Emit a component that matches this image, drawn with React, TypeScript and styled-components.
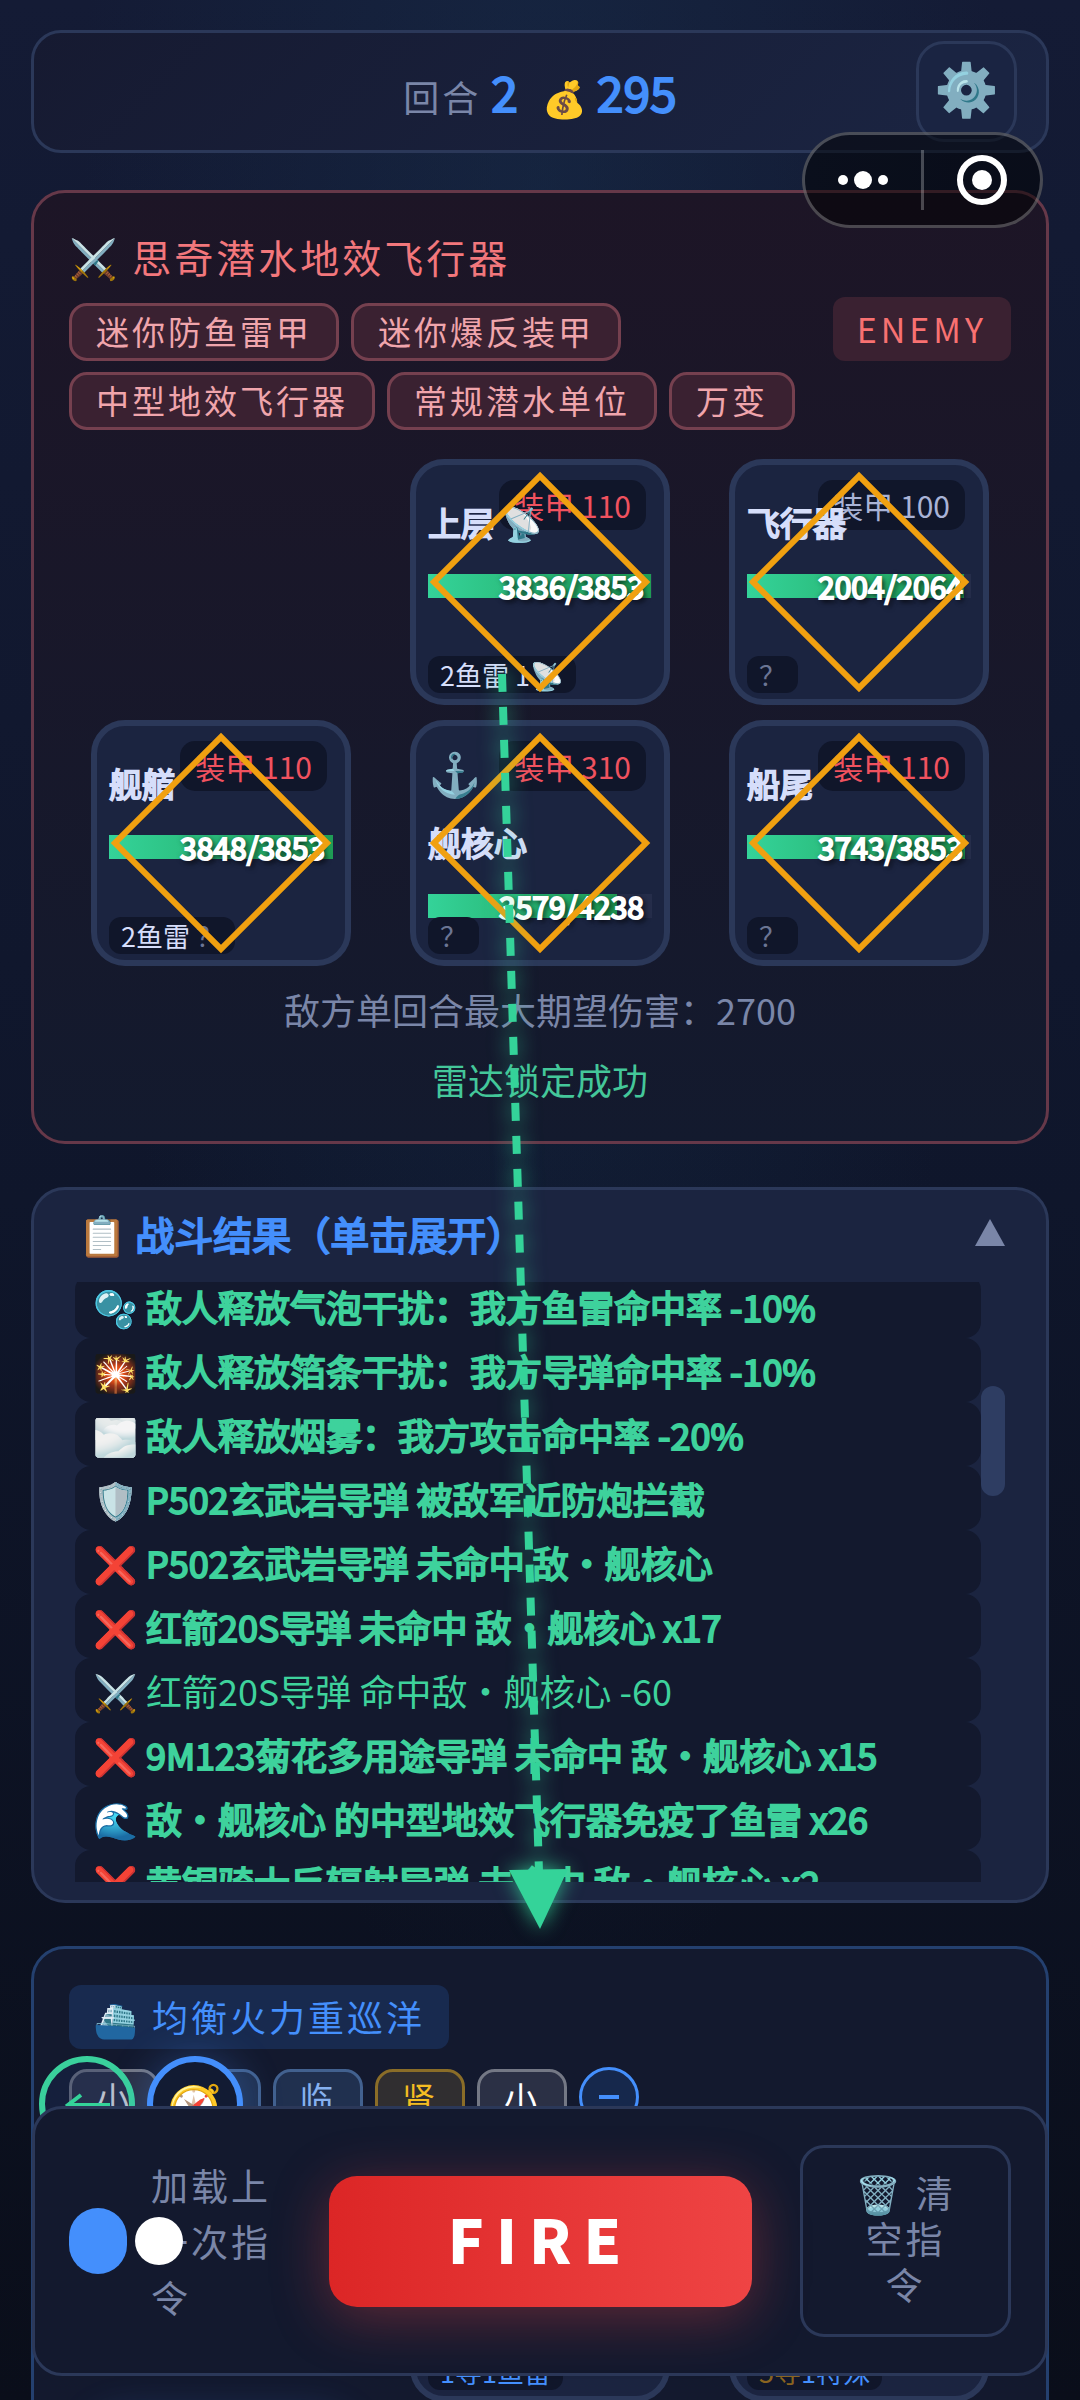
import React from 'react';
import styled, { createGlobalStyle, css } from 'styled-components';

const c = {
  line: '#2b3859',
  panel: '#1b2440',
  deep: '#13192e',
  muted: '#7a86a8',
  text: '#d6defa',
  blue: '#448ffc',
  green: '#34d399',
  red: '#f87171',
};

const Global = createGlobalStyle`
  *, *::before, *::after { box-sizing: border-box; }
  body {
    margin: 0;
    background: #0a0e1a;
    color: ${c.text};
    font-family: "Noto Sans CJK SC", "Noto Color Emoji", sans-serif;
    font-size: 36px;
  }
  button { font: inherit; color: inherit; margin: 0; padding: 0; cursor: pointer; }
  h1, h2, p, ul { margin: 0; padding: 0; font-weight: 400; }
`;

const thick = css`
  font-weight: 400;
  -webkit-text-stroke: 2px currentColor;
`;

const Screen = styled.div`
  position: relative;
  height: 100vh;
  overflow: hidden;
  padding: 30px 31px 0;
  background:
    radial-gradient(ellipse at 50% 10%, rgba(24, 50, 80, 0.42), transparent 60%),
    linear-gradient(180deg, #141b35 0%, #0f162b 50%, #0a0e1a 100%);
`;

const Header = styled.header`
  display: grid;
  grid-template-columns: 1fr auto 1fr;
  align-items: center;
  height: 123px;
  margin-bottom: 37px;
  padding: 0 29px;
  border: 3px solid ${c.line};
  border-radius: 30px;
  background: linear-gradient(135deg, #161a31 0%, #1b2543 100%);
`;

const Stats = styled.div`
  grid-column: 2;
  display: flex;
  align-items: baseline;
  padding-top: 4px;
  line-height: 60px;
`;

const StatLabel = styled.span`
  color: ${c.muted};
  letter-spacing: 3px;
`;

const StatValue = styled.strong<{ $gap?: number }>`
  margin: 0 ${(p) => p.$gap ?? 0}px 0 10px;
  color: ${c.blue};
  font-size: 48px;
  ${thick}
`;

const GearButton = styled.button`
  justify-self: end;
  width: 101px;
  height: 101px;
  padding-bottom: 12px;
  border: 3px solid ${c.line};
  border-radius: 28px;
  background: #1a2442;
  font-size: 52px;
  line-height: 84px;
`;

const Capsule = styled.div`
  position: absolute;
  top: 132px;
  right: 37px;
  z-index: 5;
  display: flex;
  align-items: center;
  width: 241px;
  height: 96px;
  border: 3px solid rgba(255, 255, 255, 0.25);
  border-radius: 48px;
  background: rgba(0, 0, 0, 0.5);
`;

const CapsuleButton = styled.button`
  flex: 1;
  display: grid;
  place-items: center;
  height: 60px;
  border: 0;
  background: none;
  & + & { border-left: 3px solid rgba(255, 255, 255, 0.25); }
`;

const Panel = styled.section<{ $tone: 'enemy' | 'log' | 'ally' }>`
  position: relative;
  margin-bottom: 43px;
  border: 3px solid ${c.line};
  border-radius: 34px;
  ${(p) =>
    p.$tone === 'enemy' &&
    css`
      padding: 33px 35px 35px;
      border-color: #663849;
      background: linear-gradient(180deg, #1d1526 0%, #131a2e 100%);
    `}
  ${(p) =>
    p.$tone === 'log' &&
    css`
      padding: 12px 41px 18px;
      background: ${c.panel};
    `}
  ${(p) =>
    p.$tone === 'ally' &&
    css`
      padding: 36px 35px 39px;
      border-color: #24406f;
      background: ${c.deep};
    `}
`;

const EnemyTitle = styled.h1`
  margin-bottom: 17px;
  color: #f2777c;
  font-size: 39px;
  line-height: 60px;
  letter-spacing: 3px;
`;

const TagBar = styled.div`
  display: flex;
  align-items: flex-start;
  justify-content: space-between;
  margin-bottom: 29px;
`;

const Tags = styled.div<{ $max?: number }>`
  display: flex;
  flex-wrap: wrap;
  gap: 11px 12px;
  max-width: ${(p) => (p.$max ? `${p.$max}px` : 'none')};
`;

const tagTone = {
  red: ['#75404f', '#3a2131', '#f0a5ac'],
  grey: ['#747885', '#2b3045', '#ffffff'],
  blue: ['#42618f', '#20304f', '#86b0f0'],
  gold: ['#8a6d28', '#302e30', '#f5bd22'],
};

const Tag = styled.span<{ $tone: keyof typeof tagTone }>`
  height: 58px;
  padding: 0 24px;
  border: 3px solid ${(p) => tagTone[p.$tone][0]};
  border-radius: 18px;
  background: ${(p) => tagTone[p.$tone][1]};
  color: ${(p) => tagTone[p.$tone][2]};
  font-size: 33px;
  line-height: 50px;
  letter-spacing: 3px;
`;

const SideBadge = styled.span`
  height: 64px;
  margin-top: -6px;
  padding: 0 24px;
  border-radius: 12px;
  background: #3a2131;
  color: ${c.red};
  font-size: 34px;
  line-height: 64px;
  letter-spacing: 4px;
`;

const Grid = styled.div`
  display: grid;
  grid-template-columns: repeat(3, 1fr);
  justify-items: center;
  gap: 15px;
`;

const Cell = styled.div<{ $glow?: boolean }>`
  position: relative;
  width: 260px;
  height: 246px;
  padding: 18px 12px 0;
  border: 6px solid ${c.line};
  border-radius: 34px;
  background: ${c.panel};
  ${(p) => p.$glow && css`box-shadow: 0 0 40px rgba(68, 143, 252, 0.3);`}
`;

const CellIcon = styled.div`
  height: 59px;
  font-size: 43px;
  line-height: 54px;
`;

const CellName = styled.div`
  position: relative;
  margin-bottom: 13px;
  font-size: 33px;
  line-height: 78px;
  white-space: pre;
  ${thick}
`;

const Bar = styled.div`
  position: relative;
  height: 24px;
  background: #252d4a;
`;

const BarFill = styled.div`
  height: 100%;
  background: linear-gradient(90deg, #34d399, #1f9d55);
`;

const BarText = styled.span`
  position: absolute;
  right: 8px;
  top: 0;
  color: #fff;
  font-size: 30px;
  line-height: 24px;
  text-shadow: 3px 3px 5px rgba(0, 0, 0, 0.8), 0 0 5px rgba(0, 0, 0, 0.5);
  ${thick}
`;

const Armor = styled.span<{ $plain?: boolean }>`
  position: absolute;
  top: 15px;
  right: 18px;
  height: 50px;
  padding: 0 15px;
  border-radius: 15px;
  background: #10162a;
  color: ${(p) => (p.$plain ? '#a9b3d6' : '#f0525f')};
  font-size: 30px;
  line-height: 50px;
`;

const Weapons = styled.span`
  position: absolute;
  left: 12px;
  bottom: 6px;
  height: 37px;
  padding: 0 12px;
  border-radius: 12px;
  background: #10162a;
  font-size: 27px;
  line-height: 38px;
  white-space: pre;
`;

const Ink = styled.span<{ $color: string }>`
  color: ${(p) => p.$color};
`;

const Diamond = styled.div`
  position: absolute;
  left: 50%;
  top: 50%;
  width: 156px;
  height: 156px;
  border: 6px solid #f0a010;
  transform: translate(-50%, -50%) rotate(45deg);
`;

const Note = styled.p<{ $ok?: boolean }>`
  color: ${(p) => (p.$ok ? '#44c79a' : c.muted)};
  line-height: 54px;
  text-align: center;
  margin-top: 16px;
`;

const LogHead = styled.button`
  display: flex;
  justify-content: space-between;
  align-items: center;
  width: 100%;
  height: 62px;
  margin-bottom: 18px;
  padding: 0 0 0 3px;
  border: 0;
  background: none;
  color: ${c.blue};
  font-size: 39px;
  white-space: pre;
  ${thick}
`;

const LogBody = styled.div`
  display: flex;
  align-items: stretch;
  height: 600px;
  overflow: hidden;
`;

const LogList = styled.ul`
  flex: 1;
  margin-top: -8px;
  list-style: none;
`;

const LogItem = styled.li<{ $plain?: boolean }>`
  height: 64px;
  padding: 0 18px;
  border-radius: 16px;
  background: ${c.deep};
  color: #3ed29c;
  line-height: 64px;
  white-space: nowrap;
  ${(p) => !p.$plain && thick}
`;

const Track = styled.div`
  width: 24px;
  padding-top: 104px;
`;

const Thumb = styled.div`
  height: 110px;
  border-radius: 12px;
  background: #2e3d62;
`;

const AllyTitle = styled.h2`
  width: fit-content;
  height: 64px;
  margin-bottom: 20px;
  padding: 0 24px;
  border-radius: 12px;
  background: #182a4f;
  color: ${c.blue};
  font-size: 36px;
  line-height: 62px;
  letter-spacing: 3px;
`;

const Collapse = styled.button`
  display: grid;
  place-items: center;
  width: 60px;
  height: 60px;
  border: 3px solid ${c.blue};
  border-radius: 50%;
  background: #16284c;
  margin-top: -2px;
`;

const Float = styled.button<{ $x: number; $color: string; $solid?: boolean }>`
  position: absolute;
  left: ${(p) => p.$x}px;
  bottom: 248px;
  z-index: 2;
  display: grid;
  place-items: center;
  width: 96px;
  height: 96px;
  border: 6px solid ${(p) => p.$color};
  border-radius: 50%;
  background: ${(p) => (p.$solid ? '#121b33' : 'rgba(27, 48, 92, 0.3)')};
  box-shadow: ${(p) => (p.$solid ? '0 0 40px rgba(68, 143, 252, 0.3)' : 'none')};
  font-size: 44px;
  line-height: 60px;
`;

const Footer = styled.footer`
  position: fixed;
  left: 32px;
  right: 32px;
  bottom: 24px;
  z-index: 3;
  display: grid;
  grid-template-columns: 212px 1fr 211px;
  column-gap: 48px;
  align-items: center;
  height: 270px;
  padding: 0 34px;
  border: 3px solid ${c.line};
  border-radius: 30px;
  background: ${c.deep};
`;

const Reload = styled.label`
  position: relative;
  display: flex;
  align-items: center;
  gap: 24px;
  color: ${c.muted};
  font-size: 37px;
  line-height: 56px;
  letter-spacing: 3px;
`;

const Toggle = styled.input`
  appearance: none;
  position: relative;
  flex: none;
  width: 58px;
  height: 66px;
  margin: 0;
  border-radius: 29px;
  background: ${c.blue};
  &::after {
    content: "";
    position: absolute;
    left: 66px;
    top: 9px;
    width: 48px;
    height: 48px;
    border-radius: 50%;
    background: #fff;
  }
`;

const ReloadText = styled.span`
  width: 124px;
`;

const Fire = styled.button`
  height: 131px;
  padding-bottom: 6px;
  border: 0;
  border-radius: 28px;
  background: linear-gradient(90deg, #dc2626, #ef4444);
  box-shadow: 0 11px 55px rgba(239, 68, 68, 0.35);
  color: #fff;
  font-size: 60px;
  font-weight: 900;
  line-height: 120px;
  letter-spacing: 12px;
`;

const Clear = styled.button`
  height: 192px;
  padding: 0 48px 6px;
  border: 3px solid ${c.line};
  border-radius: 24px;
  background: none;
  color: ${c.muted};
  font-size: 37px;
  line-height: 46px;
  letter-spacing: 3px;
`;

const ArrowLayer = styled.svg`
  position: absolute;
  left: 50%;
  top: 0;
  z-index: 1;
  width: 200px;
  height: 2000px;
  margin-left: -100px;
  pointer-events: none;
  filter: drop-shadow(0 0 10px rgba(52, 211, 153, 0.8));
`;

type Unit = {
  name: string;
  armor: number;
  hp: number;
  max: number;
  icon?: string;
  weapons: React.ReactNode;
};

const unknown = <Ink $color="#6b7594">？</Ink>;

const enemyUnits: (Unit | null)[] = [
  null,
  { name: '上层 📡', armor: 110, hp: 3836, max: 3853, weapons: '2鱼雷 1📡' },
  { name: '飞行器', armor: 100, hp: 2004, max: 2064, weapons: unknown },
  { name: '舰艏', armor: 110, hp: 3848, max: 3853, weapons: <>2鱼雷 {unknown}</> },
  { name: '舰核心', armor: 310, hp: 3579, max: 4238, icon: '⚓', weapons: unknown },
  { name: '船尾', armor: 110, hp: 3743, max: 3853, weapons: unknown },
];

const log: { icon: string; text: string; plain?: boolean }[] = [
  { icon: '🫧', text: '敌人释放气泡干扰：我方鱼雷命中率 -10%' },
  { icon: '🎇', text: '敌人释放箔条干扰：我方导弹命中率 -10%' },
  { icon: '🌫️', text: '敌人释放烟雾：我方攻击命中率 -20%' },
  { icon: '🛡️', text: 'P502玄武岩导弹 被敌军近防炮拦截' },
  { icon: '❌', text: 'P502玄武岩导弹 未命中 敌・舰核心' },
  { icon: '❌', text: '红箭20S导弹 未命中 敌・舰核心 x17' },
  { icon: '⚔️', text: '红箭20S导弹 命中敌・舰核心 -60', plain: true },
  { icon: '❌', text: '9M123菊花多用途导弹 未命中 敌・舰核心 x15' },
  { icon: '🌊', text: '敌・舰核心 的中型地效飞行器免疫了鱼雷 x26' },
  { icon: '❌', text: '黄铜骑士反辐射导弹 未命中 敌・舰核心 x2' },
];

function UnitCell({ unit }: { unit: Unit }) {
  return (
    <Cell>
      {unit.icon && <CellIcon>{unit.icon}</CellIcon>}
      <Armor $plain={unit.armor <= 100}>装甲 {unit.armor}</Armor>
      <CellName>{unit.name}</CellName>
      <Bar>
        <BarFill style={{ width: `${(unit.hp / unit.max) * 100}%` }} />
        <BarText>{unit.hp}/{unit.max}</BarText>
      </Bar>
      <Weapons>{unit.weapons}</Weapons>
      <Diamond />
    </Cell>
  );
}

export default function App() {
  return (
    <>
      <Global />
      <Screen>
        <Header>
          <Stats>
            <StatLabel>回合</StatLabel>
            <StatValue $gap={24}>2</StatValue>
            <span>💰</span>
            <StatValue>295</StatValue>
          </Stats>
          <GearButton aria-label="设置">⚙️</GearButton>
        </Header>

        <Capsule>
          <CapsuleButton aria-label="更多">
            <svg width="54" height="24" viewBox="0 0 54 24" fill="#fff">
              <circle cx="7" cy="12" r="5" />
              <circle cx="27" cy="12" r="9" />
              <circle cx="47" cy="12" r="5" />
            </svg>
          </CapsuleButton>
          <CapsuleButton aria-label="关闭">
            <svg width="52" height="52" viewBox="0 0 52 52">
              <circle cx="26" cy="26" r="22" fill="none" stroke="#fff" strokeWidth="6" />
              <circle cx="26" cy="26" r="10" fill="#fff" />
            </svg>
          </CapsuleButton>
        </Capsule>

        <Panel $tone="enemy">
          <EnemyTitle>⚔️ 思奇潜水地效飞行器</EnemyTitle>
          <TagBar>
            <Tags $max={740}>
              {['迷你防鱼雷甲', '迷你爆反装甲', '中型地效飞行器', '常规潜水单位', '万变'].map((t) => (
                <Tag key={t} $tone="red">{t}</Tag>
              ))}
            </Tags>
            <SideBadge>ENEMY</SideBadge>
          </TagBar>
          <Grid>
            {enemyUnits.map((u, i) => (u ? <UnitCell key={i} unit={u} /> : <div key={i} />))}
          </Grid>
          <Note>敌方单回合最大期望伤害：2700</Note>
          <Note $ok>雷达锁定成功</Note>
        </Panel>

        <Panel $tone="log">
          <LogHead>
            <span>📋 战斗结果（单击展开）</span>
            <svg width="30" height="28" viewBox="0 0 30 28">
              <path d="M15 0L30 27H0z" fill={c.muted} />
            </svg>
          </LogHead>
          <LogBody>
            <LogList>
              {log.map((l) => (
                <LogItem key={l.text} $plain={l.plain}>{l.icon} {l.text}</LogItem>
              ))}
            </LogList>
            <Track><Thumb /></Track>
          </LogBody>
        </Panel>

        <Panel $tone="ally">
          <AllyTitle>⛴️ 均衡火力重巡洋</AllyTitle>
          <TagBar>
            <Tags>
              <Tag $tone="grey">小</Tag>
              <Tag $tone="blue">中</Tag>
              <Tag $tone="blue">临</Tag>
              <Tag $tone="gold">肾</Tag>
              <Tag $tone="grey">小</Tag>
              <Collapse aria-label="收起">
                <svg width="20" height="4"><rect width="20" height="4" fill={c.blue} /></svg>
              </Collapse>
            </Tags>
          </TagBar>
          <Grid>
            <div />
            <Cell><Weapons><Ink $color={c.blue}>1导1鱼雷</Ink></Weapons></Cell>
            <Cell>
              <Weapons><Ink $color="#8a6420">5导</Ink><Ink $color={c.blue}>1特殊</Ink></Weapons>
            </Cell>
            <Cell $glow />
          </Grid>
        </Panel>

        <Float $x={39} $color="#3ad09c" aria-label="返回">
          <svg width="46" height="28" viewBox="0 0 46 28" fill="none" stroke="#34d399" strokeWidth="4">
            <path d="M46 15H4M17 5L4 15l13 10" />
          </svg>
        </Float>
        <Float $x={147} $color="#448ffc" $solid aria-label="指南">🧭</Float>

        <ArrowLayer viewBox="0 0 200 2000">
          <path d="M62 674L99 1872" stroke={c.green} strokeWidth="8" strokeDasharray="18 15" />
          <path d="M69 1870L128 1869L100 1929z" fill={c.green} />
        </ArrowLayer>
      </Screen>

      <Footer>
        <Reload>
          <Toggle type="checkbox" defaultChecked />
          <ReloadText>加载上一次指令</ReloadText>
        </Reload>
        <Fire>FIRE</Fire>
        <Clear>🗑️ 清空指令</Clear>
      </Footer>
    </>
  );
}
